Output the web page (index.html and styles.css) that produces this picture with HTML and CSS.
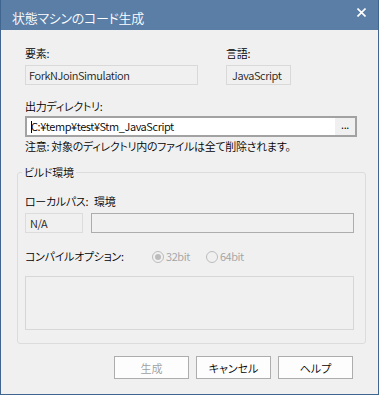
FILE: index.html
```html
<!DOCTYPE html>
<html lang="ja">
<head>
  <meta charset="UTF-8" />
  <meta name="viewport" content="width=device-width, initial-scale=1.0"/>
  <title>状態マシンのコード生成</title>
  <link rel="stylesheet" href="styles.css">
</head>
<body>

  <div class="window">
    <!-- Title bar -->
    <div class="titlebar">
      <span class="title">状態マシンのコード生成</span>
      <svg class="close" width="9" height="9" viewBox="0 0 9 9">
        <path d="M0.5 0.5 L8.5 8.5 M8.5 0.5 L0.5 8.5" stroke="#fff" stroke-width="1.6" fill="none"/>
      </svg>
    </div>

    <div class="content">
      <div class="top-row">
        <div class="col-element">
          <div class="label">要素:</div>
          <div class="field latin">ForkNJoinSimulation</div>
        </div>
        <div class="col-lang">
          <div class="label">言語:</div>
          <div class="field latin">JavaScript</div>
        </div>
      </div>

      <div class="label out-label">出力ディレクトリ:</div>
      <div class="edit">
        <span class="path latin"><span class="caret"></span>C:¥temp¥test¥Stm_JavaScript</span>
        <span class="browse">...</span>
      </div>
      <div class="note">注意: 対象のディレクトリ内のファイルは全て削除されます。</div>

      <!-- Build environment group -->
      <fieldset class="group">
        <legend>ビルド環境</legend>
        <div class="path-row">
          <span class="path-label">ローカルパス:</span>
          <span>環境</span>
        </div>
        <div class="env-row">
          <div class="box-na latin">N/A</div>
          <div class="box-env"></div>
        </div>
        <div class="opt-row">
          <span class="opt-label">コンパイルオプション:</span>
          <span class="radio-item latin"><span class="radio on"></span>32bit</span>
          <span class="radio-item latin"><span class="radio"></span>64bit</span>
        </div>
        <div class="big-box"></div>
      </fieldset>

      <div class="buttons">
        <button class="btn" disabled>生成</button>
        <button class="btn">キャンセル</button>
        <button class="btn">ヘルプ</button>
      </div>
    </div>
  </div>

</body>
</html>
```

FILE: styles.css
```css
body {
  margin: 0;
  font-family: "Noto Sans CJK JP", "Noto Sans", sans-serif;
  font-size: 11px;
  font-weight: 350;
  letter-spacing: -0.3px;
  font-feature-settings: "palt" 1;
  color: #000;
  background: #f0f0f0;
}

.latin {
  letter-spacing: -0.4px;
}

.window {
  width: 379px;
  height: 395px;
  box-sizing: border-box;
  border: 1px solid #40668f;
  border-top: 0;
  background: #f0f0f0;
}

/* Title bar */
.titlebar {
  height: 30px;
  background: #5a7ea6;
  color: #fff;
  display: flex;
  justify-content: space-between;
  align-items: flex-start;
}

.title {
  padding: 6px 0 0 11px;
  font-size: 13px;
  line-height: 24px;
}

.close {
  margin: 8px 12px 0 0;
}

.content {
  padding: 15px 21px 0 24px;
}

.label {
  line-height: 16px;
  height: 16px;
  white-space: nowrap;
}

.top-row {
  display: flex;
}

.field {
  box-sizing: border-box;
  height: 20px;
  margin-top: 4px;
  padding-left: 3px;
  border: 1px solid #d9d9d9;
  background: #f0f0f0;
  color: #222;
  line-height: 18px;
  white-space: nowrap;
}

.col-element .field {
  width: 173px;
}

.col-lang {
  margin-left: 28px;
}

.col-lang .field {
  width: 65px;
  padding-left: 5px;
}

.out-label {
  margin-top: 13px;
}

/* Output directory edit box */
.edit {
  box-sizing: border-box;
  height: 21px;
  margin-top: 2px;
  border: 2px solid #a2a2a2;
  background: #fff;
  display: flex;
}

.path {
  flex: 1;
  padding-left: 4px;
  line-height: 17px;
  white-space: nowrap;
}

.caret {
  display: inline-block;
  width: 1px;
  height: 12px;
  margin-right: -1px;
  background: #000;
  vertical-align: -2px;
}

.browse {
  width: 20px;
  background: #f0f0f0;
  text-align: center;
  font-size: 11px;
  line-height: 12px;
}

.note {
  margin-top: 1px;
  line-height: 16px;
  white-space: nowrap;
}

/* Group box */
.group {
  margin: 10px -9px 0 -8px;
  padding: 13px 11px 13px 7px;
  border: 1px solid #dcdcdc;
  border-radius: 3px;
  min-width: 0;
}

.group legend {
  padding: 0 2px;
  margin-left: -3px;
  line-height: 16px;
}

.path-row {
  display: flex;
  line-height: 16px;
  white-space: nowrap;
}

.path-label {
  width: 69px;
}

.env-row {
  display: flex;
  gap: 8px;
  margin-top: 4px;
}

.box-na {
  box-sizing: border-box;
  width: 58px;
  height: 20px;
  padding-left: 4px;
  border: 1px solid #dcdcdc;
  color: #222;
  line-height: 18px;
}

.box-env {
  flex: 1;
  height: 20px;
  box-sizing: border-box;
  border: 1px solid #adadad;
}

.opt-row {
  display: flex;
  margin-top: 15px;
  line-height: 16px;
  white-space: nowrap;
}

.opt-label {
  width: 127px;
}

.radio-item {
  display: flex;
  align-items: flex-start;
  color: #a3a3a3;
}

.radio-item + .radio-item {
  margin-left: 16px;
}

.radio {
  box-sizing: border-box;
  width: 12px;
  height: 12px;
  margin: 3px 2px 0 0;
  border: 1px solid #bcbcbc;
  border-radius: 50%;
  display: flex;
  align-items: center;
  justify-content: center;
}

.radio.on::after {
  content: "";
  width: 6px;
  height: 6px;
  border-radius: 50%;
  background: #bcbcbc;
}

.big-box {
  box-sizing: border-box;
  height: 54px;
  margin-top: 12px;
  border: 1px solid #d7d7d7;
}

/* Dialog buttons */
.buttons {
  display: flex;
  justify-content: flex-end;
  gap: 7px;
  margin-top: 12px;
  padding-right: 4px;
}

.btn {
  width: 75px;
  height: 23px;
  padding: 0;
  border: 1px solid #adadad;
  background: #fdfdfd;
  color: #000;
  font: inherit;
}

.btn:disabled {
  color: #a0a0a0;
}
```
